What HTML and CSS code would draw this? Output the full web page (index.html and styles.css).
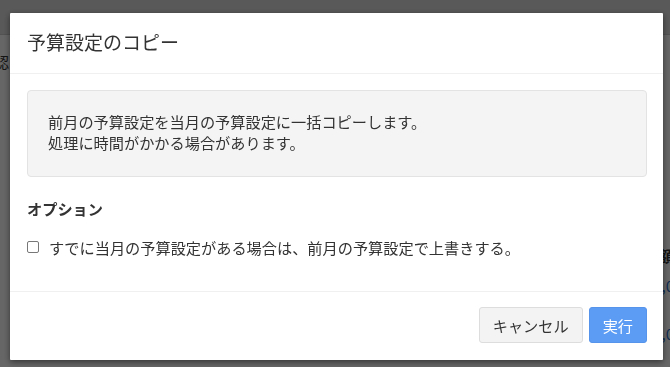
FILE: index.html
```html
<!DOCTYPE html>
<html lang="ja">
	<head>
		<meta charset="UTF-8">
		<meta name="viewport" content="width=device-width, initial-scale=1.0">
		<title>予算設定のコピー</title>
		<link rel="stylesheet" href="styles.css">
	</head>
	<body>
		<div class="page">
			<div class="page-header"></div>
			<div class="page-row page-row-first">
				<span class="page-label">認</span>
			</div>
			<div class="page-row page-row-right">
				<span class="page-strong">額</span>
			</div>
			<div class="page-row page-row-right">
				<span class="page-num">,0</span>
			</div>
			<div class="page-row page-row-right">
				<span class="page-num">,0</span>
			</div>
		</div>

		<div class="overlay">
			<div class="modal">
				<div class="modal-header">
					<h1 class="modal-title">予算設定のコピー</h1>
				</div>

				<div class="modal-body">
					<div class="notice">
						前月の予算設定を当月の予算設定に一括コピーします。<br>
						処理に時間がかかる場合があります。
					</div>

					<h2 class="option-title">オプション</h2>
					<label class="option-check">
						<input type="checkbox" name="overwrite">
						<span>すでに当月の予算設定がある場合は、前月の予算設定で上書きする。</span>
					</label>
				</div>

				<div class="modal-footer">
					<button class="btn btn-default">キャンセル</button>
					<button class="btn btn-primary">実行</button>
				</div>
			</div>
		</div>
	</body>
</html>
```

FILE: styles.css
```css
:root {
    --text: #333333;
    --primary: #5c9cf5;
}

* {
    box-sizing: border-box;
    margin: 0;
    padding: 0;
}

body {
    font-family: "Noto Sans CJK JP", "Noto Sans", sans-serif;
    font-size: 15.2px;
    color: var(--text);
    background: #ffffff;
    width: 670px;
    height: 367px;
    overflow: hidden;
}

/* Page behind the dialog */
.page {
    height: 367px;
}

.page-header {
    height: 35px;
    background: #dedede;
    border-bottom: 1px solid #cccccc;
}

.page-row {
    display: flex;
    font-size: 15px;
    line-height: 20px;
}

.page-row-first {
    padding-top: 17px;
    margin-left: -6px;
}

.page-row-right {
    justify-content: flex-end;
    margin-right: -4px;
}

.page-row-right:nth-child(3) {
    margin-top: 174px;
    font-weight: 700;
}

.page-row-right:nth-child(4) {
    margin-top: 10px;
}

.page-row-right:nth-child(5) {
    margin-top: 28px;
}

.page-num {
    color: #2a6fc9;
}

/* Overlay + dialog */
.overlay {
    position: fixed;
    inset: 0;
    background: rgba(0, 0, 0, 0.6);
    padding: 13px 0 0 10px;
}

.modal {
    width: 653px;
    background: #ffffff;
    border-radius: 1px;
    box-shadow: 0 2px 6px rgba(0, 0, 0, 0.5);
}

.modal-header {
    height: 61px;
    padding: 0 17px;
    display: flex;
    align-items: center;
    border-bottom: 1px solid #f0f0f0;
}

.modal-title {
    font-size: 19px;
    font-weight: 400;
    line-height: 1;
    margin-top: -3px;
    color: var(--text);
}

.modal-body {
    padding: 16px 16px 34px 17px;
}

.notice {
    background: #f4f4f4;
    border: 1px solid #e3e3e3;
    border-radius: 4px;
    padding: 20px 20px 23px;
    line-height: 21px;
}

.option-title {
    font-size: 15.2px;
    font-weight: 700;
    line-height: 20px;
    margin-top: 21px;
}

.option-check {
    display: flex;
    align-items: center;
    gap: 10px;
    margin-top: 19px;
    line-height: 20px;
}

.option-check input {
    appearance: none;
    width: 12px;
    height: 12px;
    border: 1px solid #777777;
    border-radius: 2px;
    background: #ffffff;
    margin: 0;
}

.modal-footer {
    border-top: 1px solid #f0f0f0;
    padding: 15px 16px 17px 17px;
    display: flex;
    justify-content: flex-end;
    gap: 6px;
}

.btn {
    font-family: inherit;
    font-size: 15.2px;
    height: 36px;
    padding: 0 13px;
    border-radius: 3px;
    cursor: pointer;
}

.btn-default {
    background: #f3f3f3;
    border: 1px solid #dddddd;
    color: var(--text);
}

.btn-primary {
    background: var(--primary);
    border: 1px solid #5693ea;
    color: #ffffff;
}
```
